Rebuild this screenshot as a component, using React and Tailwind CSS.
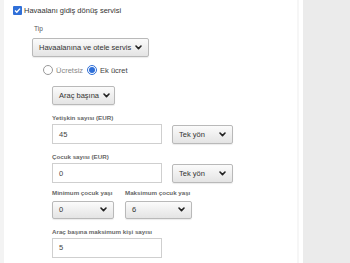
import React from 'react';

const Chevron = () => (
  <svg width="7" height="5" viewBox="0 0 7 5" className="shrink-0">
    <path d="M1 1 L3.5 3.6 L6 1" fill="none" stroke="#222" strokeWidth="1.6" strokeLinecap="round" strokeLinejoin="round" />
  </svg>
);

const Select = ({ value, className = '' }) => (
  <div className={`flex items-center justify-between whitespace-nowrap rounded-[2px] border border-[#b9b9b9] bg-gradient-to-b from-[#fbfbfb] to-[#e4e4e4] shadow-[0_1px_1px_rgba(0,0,0,0.08)] px-[6px] text-[7.5px] text-[#333] ${className}`}>
    <span>{value}</span>
    <Chevron />
  </div>
);

const Input = ({ value }) => (
  <div className="flex items-center w-[110px] h-[20px] border border-[#cfcfcf] bg-white px-[6px] text-[7.5px] text-[#444]">
    {value}
  </div>
);

const Label = ({ children, className = '' }) => (
  <div className={`text-[6.2px] font-bold text-[#666] leading-none whitespace-nowrap ${className}`}>{children}</div>
);

export default function App() {
  return (
    <div className="w-[350px] h-[263px] flex bg-white overflow-hidden" style={{ fontFamily: '"Liberation Sans", Arial, sans-serif' }}>
      <div className="w-[4px] bg-[#f3f3f3]" />
      <div className="flex-1 flex flex-col">
        <div className="flex items-center gap-[2px] pl-[9px] pt-[5px]">
          <div className="w-[9px] h-[9px] rounded-[1px] bg-[#2f6fd8] flex items-center justify-center">
            <svg width="7" height="7" viewBox="0 0 7 7">
              <path d="M1 3.6 L2.8 5.3 L6 1.6" fill="none" stroke="white" strokeWidth="1.4" />
            </svg>
          </div>
          <span className="text-[7.5px] text-[#333]">Havaalanı gidiş dönüş servisi</span>
        </div>

        <div className="pl-[28px] mt-[10px]">
          <div className="text-[6.5px] text-[#555] pl-[2px] leading-none">Tip</div>
          <Select value="Havaalanına ve otele servis" className="w-[117px] h-[19px] mt-[5px]" />
        </div>

        <div className="flex items-center pl-[39px] mt-[8px] text-[7.5px]">
          <div className="w-[10px] h-[10px] rounded-full border border-[#999] bg-white" />
          <span className="ml-[3px] text-[#888]">Ücretsiz</span>
          <div className="ml-[4px] w-[10px] h-[10px] rounded-full border border-[#2f6fd8] bg-white flex items-center justify-center">
            <div className="w-[6px] h-[6px] rounded-full bg-[#2f6fd8]" />
          </div>
          <span className="ml-[3px] text-[#444]">Ek ücret</span>
        </div>

        <div className="pl-[48px] mt-[10px] flex flex-col">
          <Select value="Araç başına" className="w-[63px] h-[19px] gap-[4px]" />

          <Label className="mt-[10px]">Yetişkin sayısı (EUR)</Label>
          <div className="flex items-center gap-[10px] mt-[3px]">
            <Input value="45" />
            <Select value="Tek yön" className="w-[61px] h-[19px]" />
          </div>

          <Label className="mt-[10px]">Çocuk sayısı (EUR)</Label>
          <div className="flex items-center gap-[10px] mt-[3px]">
            <Input value="0" />
            <Select value="Tek yön" className="w-[61px] h-[19px]" />
          </div>

          <div className="flex gap-[11px] mt-[7px]">
            <div className="flex flex-col">
              <Label>Minimum çocuk yaşı</Label>
              <Select value="0" className="w-[62px] h-[18px] mt-[4px]" />
            </div>
            <div className="flex flex-col">
              <Label>Maksimum çocuk yaşı</Label>
              <Select value="6" className="w-[67px] h-[18px] mt-[4px]" />
            </div>
          </div>

          <Label className="mt-[10px]">Araç başına maksimum kişi sayısı</Label>
          <div className="mt-[3px]">
            <Input value="5" />
          </div>
        </div>
      </div>
      <div className="w-[2px] bg-[#f6f6f6]" />
      <div className="w-[4px] bg-white" />
      <div className="w-[47px] bg-[#ebebeb]" />
    </div>
  );
}
